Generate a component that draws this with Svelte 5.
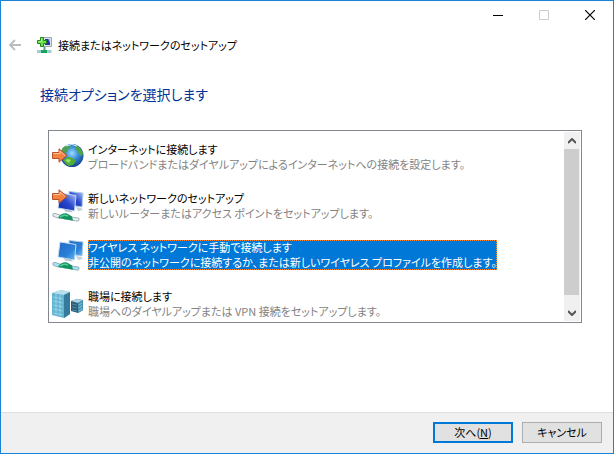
<script>
	let selected = $state('wireless');

	const options = [
		{
			id: 'internet',
			title: 'インターネットに接続します',
			text: 'ブロードバンドまたはダイヤルアップによるインターネットへの接続を設定します。'
		},
		{
			id: 'network',
			title: '新しいネットワークのセットアップ',
			text: '新しいルーターまたはアクセス ポイントをセットアップします。'
		},
		{
			id: 'wireless',
			title: 'ワイヤレス ネットワークに手動で接続します',
			text: '非公開のネットワークに接続するか、または新しいワイヤレス プロファイルを作成します。'
		},
		{
			id: 'work',
			title: '職場に接続します',
			text: '職場へのダイヤルアップまたは VPN 接続をセットアップします。'
		}
	];
</script>

{#snippet arrow()}
	<path d="M.5 4.500h6.500V.8l8 6.700-8 6.700v-3.700H.5z" fill="#f3823f" stroke="#b5522c" />
	<path d="M1.500 5.500H8V3l5 4.500" fill="none" stroke="#ffc198" />
{/snippet}

{#snippet monitors(fill)}
	<path d="M17 2.500l14 1.500-1 14-12-2z" {fill} stroke="#a9c9e6" />
	<path d="M24 18l5 1 2 2-5 1z" fill="#c3d2dc" />
	<path d="M8 4l16 2.500-1.500 15.500L6 19z" {fill} stroke="#c4dcf0" />
	<path d="M12 20l7 1.500 2 2-8-1z" fill="#b3c4d0" />
{/snippet}

{#snippet cable(rod)}
	<path d="M2.500 26l6 2M19 29.500l6.500 1" stroke="#8fa5ad" stroke-width="4" stroke-linecap="round" />
	<path d="M2.500 26l6 2M19 29.500l6.500 1" stroke={rod} stroke-width="2.500" stroke-linecap="round" />
	<path d="M6 28.500q4-5 9-4l5 3 1 4-8-1z" fill="#13915e" />
	<path d="M8 28q4-3 8-1" fill="none" stroke="#4fd394" stroke-width="1.500" />
{/snippet}

<div class="window">
	<div class="titlebar">
		<button class="caption" aria-label="最小化">
			<svg width="10" height="10"><path d="M0 5.500h10" stroke="#000" /></svg>
		</button>
		<button class="caption" aria-label="最大化" disabled>
			<svg width="10" height="10"><path d="M.5.5h9v9h-9z" fill="none" stroke="#ccc" /></svg>
		</button>
		<button class="caption" aria-label="閉じる">
			<svg width="10" height="10"><path d="M0 0l10 10M10 0L0 10" stroke="#000" stroke-width="1.200" /></svg>
		</button>
	</div>

	<header>
		<button class="back" aria-label="戻る" disabled>
			<svg width="12" height="12"><path d="M12 6H1M6 1L1 6l5 5" fill="none" stroke="#bcbcbc" stroke-width="1.800" /></svg>
		</button>
		<svg class="logo" width="16" height="18" viewBox="0 0 16 18">
			<path d="M5.500 1.500h10v9h-8z" fill="#e0e4e8" stroke="#a0a7ad" />
			<path d="M9 3h5v6H9z" fill="#2531b5" />
			<path d="M12 3h2v4z" fill="#8ca6ee" />
			<path d="M8.500 11v4" stroke="#5aa083" stroke-width="2" />
			<path d="M1 15.500h14.500" stroke="#9bd0cc" stroke-width="3" />
			<path d="M5 14h6v3H5z" fill="#1da25c" />
			<path d="M4.500 1.500h3v3h3v3h-3v3h-3v-3h-3v-3h3z" fill="#6be04a" stroke="#1f8a1b" />
			<path d="M5.500 2.500v3h-3" fill="none" stroke="#b5f597" />
		</svg>
		<span>接続またはネットワークのセットアップ</span>
	</header>

	<main>
		<h1>接続オプションを選択します</h1>

		<div class="frame">
			<div class="list" role="listbox" aria-label="接続オプション">
				{#each options as option (option.id)}
					<button
						class="option"
						class:selected={selected === option.id}
						role="option"
						aria-selected={selected === option.id}
						onclick={() => (selected = option.id)}
					>
						<svg class="icon" width="32" height="34" viewBox="0 0 32 34">
							{#if option.id === 'internet'}
								<defs>
									<radialGradient id="sea" cx=".5" cy=".4" r=".6">
										<stop offset="0" stop-color="#9bdcff" />
										<stop offset=".5" stop-color="#3588d8" />
										<stop offset="1" stop-color="#163f8c" />
									</radialGradient>
								</defs>
								<circle cx="20" cy="15.500" r="11.500" fill="url(#sea)" />
								<path d="M10 9q3-4 7-4l2 2-3 2-1 3-4 2-2-1z" fill="#4d9f53" />
								<path d="M23 5q6 2 8 8l-1 3-3-1-1-4-3-1 1-3z" fill="#4fa545" />
								<path d="M11 20l5-3 5 1 3 3-3 4-4 1q-4-2-6-6z" fill="#4eae35" />
								<path d="M13 20l3-1 3 1-2 3z" fill="#a0dc72" />
								<path d="M14 6q6-3 11 0" fill="none" stroke="#d7f3ff" />
								<g transform="translate(0 8)">{@render arrow()}</g>
							{:else if option.id === 'network'}
								<defs>
									<linearGradient id="navy" x1="0" y1="1" x2="1" y2="0">
										<stop offset="0" stop-color="#1025a0" />
										<stop offset=".5" stop-color="#2948d0" />
										<stop offset="1" stop-color="#b4c9f6" />
									</linearGradient>
								</defs>
								{@render monitors('url(#navy)')}
								{@render cable('#e6ecec')}
								{@render arrow()}
							{:else if option.id === 'wireless'}
								<defs>
									<linearGradient id="azure" x1="0" y1="0" x2="1" y2="1">
										<stop offset="0" stop-color="#2169c2" />
										<stop offset=".6" stop-color="#2a80d8" />
										<stop offset="1" stop-color="#63bdf5" />
									</linearGradient>
								</defs>
								{@render monitors('url(#azure)')}
								{@render cable('#a5e1f7')}
							{:else}
								<path d="M0 6l9-3 9 2v22l-6 4-12-3z" fill="#65b3d2" />
								<path d="M0 6l9-3 9 2-6 3z" fill="#b9dfeb" />
								<path d="M12 8l6-3v22l-6 4z" fill="#357a9b" />
								<path d="M1 10l10 2M1 14l10 2M1 18l10 2M1 22l10 2M1 26l10 2M4 7v21M8 8v21" stroke="#a5dcee" stroke-width=".7" />
								<path d="M19 14l6-2 6 1v10l-5 3-7-2z" fill="#2c5f7a" />
								<path d="M19 14l6-2 6 1-5 3z" fill="#a9d5e3" />
								<path d="M26 16l5-3v10l-5 3z" fill="#4b94b4" />
								<path d="M20 17l5 1M20 20l5 1M20 23l5 1" stroke="#6199b2" stroke-width=".7" />
								<path d="M27 18l3-2M27 21l3-2M27 24l3-2" stroke="#a0d6e6" stroke-width=".7" />
							{/if}
						</svg>
						<span class="label">
							<span class="name">{option.title}</span>
							<span class="text">{option.text}</span>
						</span>
					</button>
				{/each}
			</div>
			<div class="scrollbar">
				<button aria-label="上へスクロール">
					<svg width="8" height="6"><path d="M0 5l4-4 4 4" fill="none" stroke="#555" stroke-width="2" /></svg>
				</button>
				<div class="track"><div class="thumb"></div></div>
				<button aria-label="下へスクロール">
					<svg width="8" height="6"><path d="M0 1l4 4 4-4" fill="none" stroke="#555" stroke-width="2" /></svg>
				</button>
			</div>
		</div>
	</main>

	<footer>
		<button class="action primary">次へ(<u>N</u>)</button>
		<button class="action">キャンセル</button>
	</footer>
</div>

<style>
	:global(body) {
		margin: 0;
	}

	.window {
		display: flex;
		flex-direction: column;
		box-sizing: border-box;
		min-height: 100vh;
		border: 1px solid #1883d7;
		background: #fff;
		color: #000;
		font-family: 'Noto Sans CJK JP', sans-serif;
		font-size: 11px;
		line-height: 15px;
		font-feature-settings: 'palt';
	}

	button {
		padding: 0;
		border: 0;
		background: none;
		color: inherit;
		font: inherit;
		font-feature-settings: inherit;
	}

	svg {
		display: block;
	}

	.titlebar {
		display: flex;
		justify-content: flex-end;
	}

	.caption {
		display: flex;
		align-items: center;
		justify-content: center;
		width: 46px;
		height: 28px;
	}

	header {
		display: flex;
		align-items: center;
		height: 32px;
		padding-left: 8px;
	}

	.logo {
		margin: 0 6px 0 15px;
	}

	main {
		display: flex;
		flex: 1;
		flex-direction: column;
		padding: 21px 31px 89px 47px;
	}

	h1 {
		margin: 0 0 24px -8px;
		color: #003399;
		font-size: 14px;
		font-weight: 400;
		line-height: 24px;
	}

	.frame {
		display: flex;
		flex: 1;
		padding: 1px;
		border: 1px solid #828790;
	}

	.list {
		flex: 1;
		height: 189px;
		padding-left: 2px;
		overflow: hidden;
	}

	.option {
		display: flex;
		align-items: flex-start;
		width: 100%;
		height: 49px;
		padding-top: 8px;
		text-align: left;
	}

	.icon {
		flex: none;
		margin-right: 4px;
	}

	.label {
		display: flex;
		flex-direction: column;
		margin-top: 2px;
		white-space: nowrap;
	}

	.text {
		color: #838383;
	}

	.selected .label {
		outline: 1px dotted #ff8728;
		outline-offset: -1px;
		background: #0078d7;
		color: #fff;
	}

	.selected .text {
		color: #fff;
	}

	.scrollbar {
		display: flex;
		flex-direction: column;
		width: 16px;
		background: #f0f0f0;
	}

	.scrollbar button {
		display: flex;
		align-items: center;
		justify-content: center;
		height: 17px;
	}

	.track {
		flex: 1;
	}

	.thumb {
		width: 15px;
		height: 94%;
		background: #cdcdcd;
	}

	footer {
		display: flex;
		justify-content: flex-end;
		gap: 9px;
		padding: 9px 11px 10px;
		border-top: 1px solid #dfdfdf;
		background: #f0f0f0;
	}

	.action {
		width: 80px;
		height: 21px;
		border: 1px solid #adadad;
		background: #e1e1e1;
		line-height: 17px;
	}

	.primary {
		border: 2px solid #0078d7;
	}
</style>
